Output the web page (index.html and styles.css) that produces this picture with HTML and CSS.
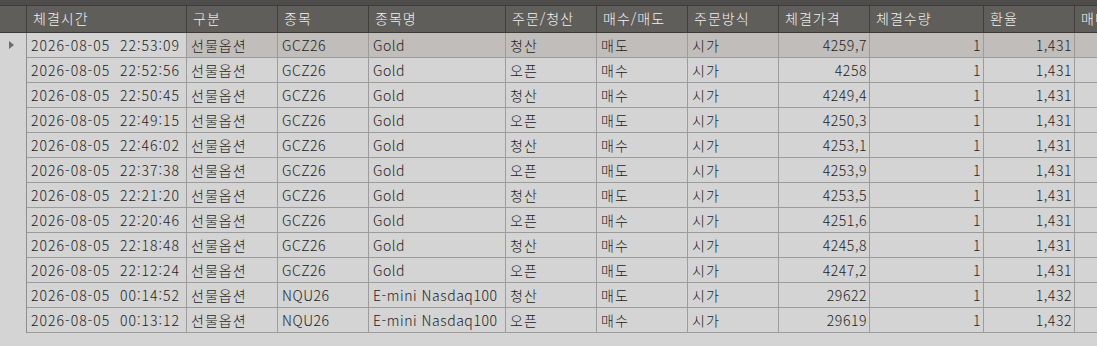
FILE: index.html
```html
<!DOCTYPE html>
<html lang="ko">
<head>
<meta charset="utf-8">
<link rel="stylesheet" href="styles.css">
</head>
<body>
<div class="grid">
  <div class="topband"></div>
  <div class="row head">
    <div class="ind"></div>
    <div class="c w160">체결시간</div>
    <div class="c w91">구분</div>
    <div class="c w91">종목</div>
    <div class="c w137">종목명</div>
    <div class="c w91">주문/청산</div>
    <div class="c w91">매수/매도</div>
    <div class="c w91">주문방식</div>
    <div class="c w91">체결가격</div>
    <div class="c w114">체결수량</div>
    <div class="c w91">환율</div>
    <div class="c w91">매매</div>
  </div>
  <div id="body"></div>
</div>
<script>
const data = [
 ["2026-08-05  22:53:09","GCZ26","Gold","청산","매도","4259,7","1,431"],
 ["2026-08-05  22:52:56","GCZ26","Gold","오픈","매수","4258","1,431"],
 ["2026-08-05  22:50:45","GCZ26","Gold","청산","매수","4249,4","1,431"],
 ["2026-08-05  22:49:15","GCZ26","Gold","오픈","매도","4250,3","1,431"],
 ["2026-08-05  22:46:02","GCZ26","Gold","청산","매수","4253,1","1,431"],
 ["2026-08-05  22:37:38","GCZ26","Gold","오픈","매도","4253,9","1,431"],
 ["2026-08-05  22:21:20","GCZ26","Gold","청산","매도","4253,5","1,431"],
 ["2026-08-05  22:20:46","GCZ26","Gold","오픈","매수","4251,6","1,431"],
 ["2026-08-05  22:18:48","GCZ26","Gold","청산","매수","4245,8","1,431"],
 ["2026-08-05  22:12:24","GCZ26","Gold","오픈","매도","4247,2","1,431"],
 ["2026-08-05  00:14:52","NQU26","E-mini Nasdaq100","청산","매도","29622","1,432"],
 ["2026-08-05  00:13:12","NQU26","E-mini Nasdaq100","오픈","매수","29619","1,432"]
];
const body = document.getElementById('body');
data.forEach((d, i) => {
  const r = document.createElement('div');
  r.className = 'row' + (i === 0 ? ' sel' : '');
  r.innerHTML =
    '<div class="ind">' + (i === 0 ? '<span class="tri"></span>' : '') + '</div>' +
    '<div class="c w160 first">' + d[0] + '</div>' +
    '<div class="c w91 ko">선물옵션</div>' +
    '<div class="c w91">' + d[1] + '</div>' +
    '<div class="c w137">' + d[2] + '</div>' +
    '<div class="c w91 ko">' + d[3] + '</div>' +
    '<div class="c w91 ko">' + d[4] + '</div>' +
    '<div class="c w91 ko">시가</div>' +
    '<div class="c w91 num">' + d[5] + '</div>' +
    '<div class="c w114 num">1</div>' +
    '<div class="c w91 num">' + d[6] + '</div>' +
    '<div class="c w91"></div>';
  body.appendChild(r);
});
</script>
</body>
</html>
```
FILE: styles.css
```css
html, body {
  margin: 0;
  padding: 0;
  background: #d4d4d4;
  overflow: hidden;
}
.grid {
  width: 1097px;
  height: 346px;
  overflow: hidden;
  font-family: "Noto Sans CJK KR", "Noto Sans", sans-serif;
  font-weight: 300;
  background: #d4d4d4;
}
.topband {
  height: 5px;
  background: #4e4d4b;
  border-bottom: 1px solid #3c3c3a;
}
.row {
  display: flex;
  flex-wrap: nowrap;
  height: 25px;
  white-space: pre;
}
.c, .ind {
  flex: none;
  box-sizing: border-box;
  overflow: hidden;
}
.ind {
  width: 27px;
  border-right: 1px solid #8e8e8e;
  position: relative;
}
.w160 { width: 160px; }
.w91 { width: 91px; }
.w137 { width: 137px; }
.w114 { width: 114px; }

.head {
  height: 27px;
  background: #5f5e5b;
  border-bottom: 1px solid #3a3a38;
  box-sizing: border-box;
  color: #f2f2f2;
  font-size: 14px;
  letter-spacing: 1px;
}
.head .ind {
  border-right: 1px solid #3e3e3c;
}
.head .c {
  border-right: 1px solid #3e3e3c;
  padding-left: 6px;
  line-height: 25px;
}
.row:not(.head) {
  color: #222;
  font-size: 14px;
  letter-spacing: 0.55px;
}
.row:not(.head) .c {
  border-right: 1px solid #9c9c9c;
  border-bottom: 1px solid #9c9c9c;
  padding: 0 3px 0 4px;
  line-height: 24px;
}
.row:not(.head) .first {
  letter-spacing: 1px;
}
.row:not(.head) .ko {
  letter-spacing: 1px;
}
.row:not(.head) .num {
  text-align: right;
  padding-right: 2px;
}
.sel .c {
  background: #c1bdba;
}
.sel .c.first {
  background: #d4d4d4;
}
.tri {
  position: absolute;
  left: 9px;
  top: 8px;
  width: 0;
  height: 0;
  border-top: 4px solid transparent;
  border-bottom: 4px solid transparent;
  border-left: 5px solid #6c6c6c;
}
```
